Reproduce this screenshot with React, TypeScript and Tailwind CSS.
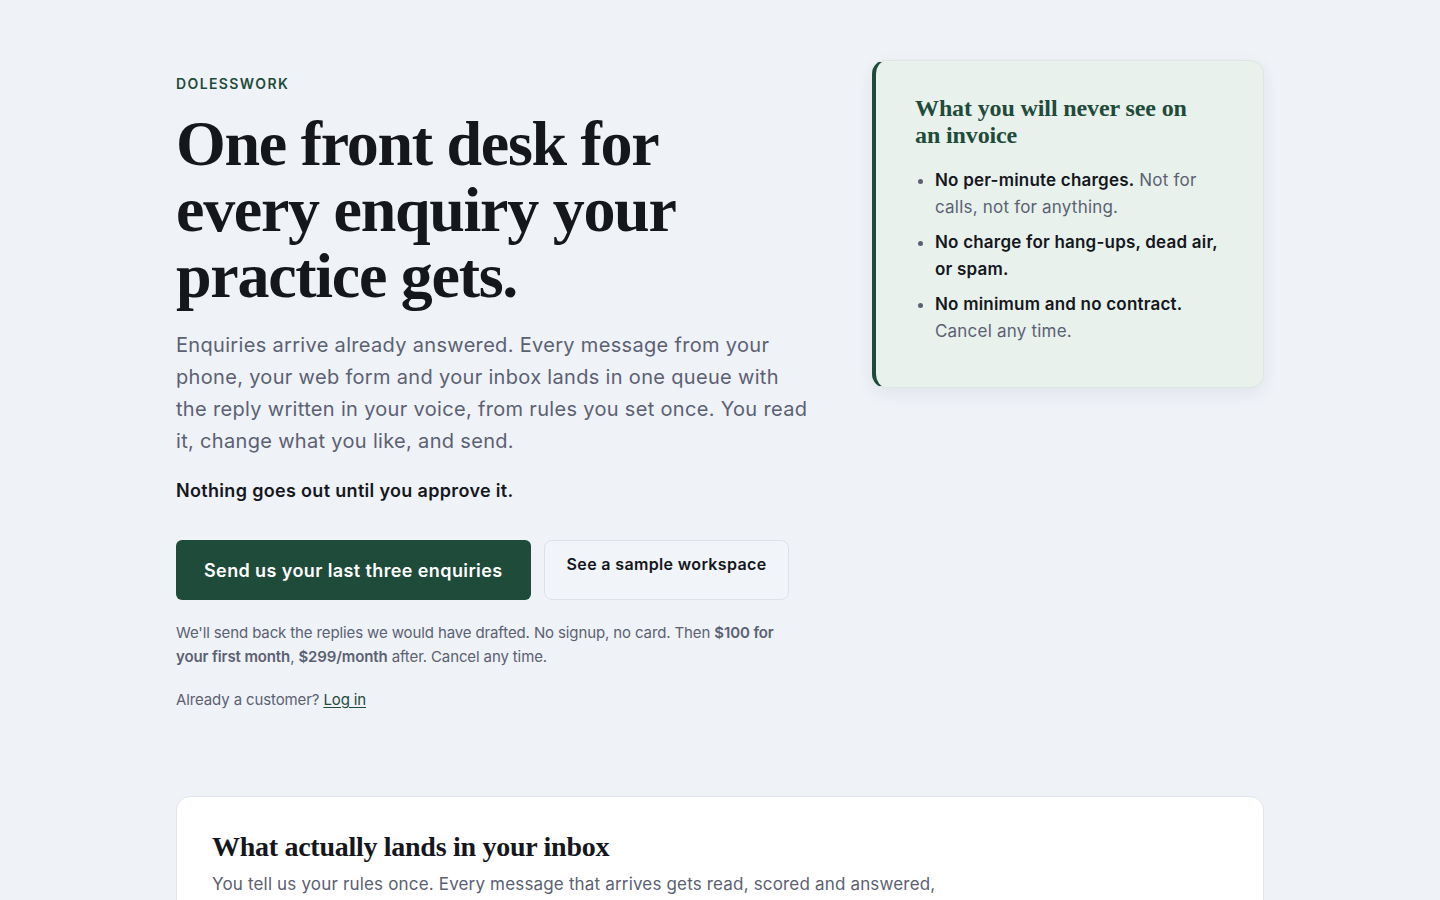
const serif = "font-['Liberation_Serif','DejaVu_Serif',serif]";

function NeverCard() {
  return (
    <aside className="rounded-[14px] border border-[#dfe6e2] border-l-4 border-l-[#1f4b3b] bg-[#e8f1ec] pt-[34px] pr-[36px] pb-[42px] pl-[39px] shadow-[0_6px_18px_rgba(30,50,80,0.07)]">
      <h2 className={`${serif} max-w-[292px] text-[24px] font-bold leading-[27px] tracking-[-0.005em] text-[#1f4b3b]`}>
        What you will never see on an invoice
      </h2>
      <ul className="mt-[18px] flex list-disc flex-col gap-2 pl-5 text-[17px] leading-[27px] tracking-[0.012em] text-[#5b6172] marker:text-[#5b6172]">
        <li>
          <strong className="font-semibold text-[#15171c]">No per-minute charges.</strong> Not for calls, not for anything.
        </li>
        <li>
          <strong className="font-semibold text-[#15171c]">No charge for hang-ups, dead air, or spam.</strong>
        </li>
        <li>
          <strong className="font-semibold text-[#15171c]">No minimum and no contract.</strong> Cancel any time.
        </li>
      </ul>
    </aside>
  );
}

export default function App() {
  return (
    <div className="min-h-screen bg-[#eff2f7] font-['Inter','Noto_Sans',sans-serif] text-[#15171c] antialiased">
      <main className="mx-auto w-[1088px] pt-[60px]">
        <section className="grid grid-cols-[640px_392px] items-start gap-[56px]">
          <div className="pt-[14px]">
            <p className="text-[14px] font-semibold leading-5 tracking-[0.1em] text-[#1f4b3b]">DOLESSWORK</p>
            <h1 className={`${serif} mt-[17px] max-w-[560px] text-[64px] font-bold leading-[66px] tracking-[-0.02em] text-[#15171c]`}>
              One front desk for every enquiry your practice gets.
            </h1>
            <p className="mt-[20px] max-w-[636px] text-[20px] leading-[32px] tracking-[0.016em] text-[#5b6172]">
              Enquiries arrive already answered. Every message from your phone, your web form and your inbox lands in
              one queue with the reply written in your voice, from rules you set once. You read it, change what you
              like, and send.
            </p>
            <p className="mt-[20px] text-[18px] font-semibold leading-[28px] tracking-[0.018em]">
              Nothing goes out until you approve it.
            </p>

            <div className="mt-[35px] flex items-start gap-[13px]">
              <button className="h-[60px] rounded-md bg-[#1f4b3b] px-7 text-[18px] font-semibold tracking-[0.022em] text-white">
                Send us your last three enquiries
              </button>
              <button className="h-[60px] rounded-lg border border-[#dde2ea] bg-[#f1f4f8] px-[22px] pb-[23px] pt-[11px] text-[16px] font-semibold leading-6 tracking-[0.022em] text-[#15171c]">
                See a sample workspace
              </button>
            </div>

            <p className="mt-[21px] max-w-[612px] text-[15px] leading-6 tracking-[-0.008em] text-[#5b6172]">
              We'll send back the replies we would have drafted. No signup, no card. Then{' '}
              <strong className="font-semibold">$100 for your first month</strong>,{' '}
              <strong className="font-semibold">$299/month</strong> after. Cancel any time.
            </p>
            <p className="mt-[19px] text-[15px] leading-6 tracking-[-0.008em] text-[#5b6172]">
              Already a customer?{' '}
              <a href="#" className="text-[#1f4b3b] underline underline-offset-2">
                Log in
              </a>
            </p>
          </div>

          <NeverCard />
        </section>

        <section className="mt-[84px] rounded-[14px] border border-[#e1e5ec] bg-white px-[35px] pt-[34px] pb-10">
          <h2 className={`${serif} text-[28px] font-bold leading-[32px] tracking-[-0.01em] text-[#15171c]`}>
            What actually lands in your inbox
          </h2>
          <p className="mt-[7px] max-w-[730px] text-[17px] leading-[28px] tracking-[0.01em] text-[#5b6172]">
            You tell us your rules once. Every message that arrives gets read, scored and answered, and the reply
            waits in your queue until you approve it.
          </p>
        </section>
      </main>
    </div>
  );
}
